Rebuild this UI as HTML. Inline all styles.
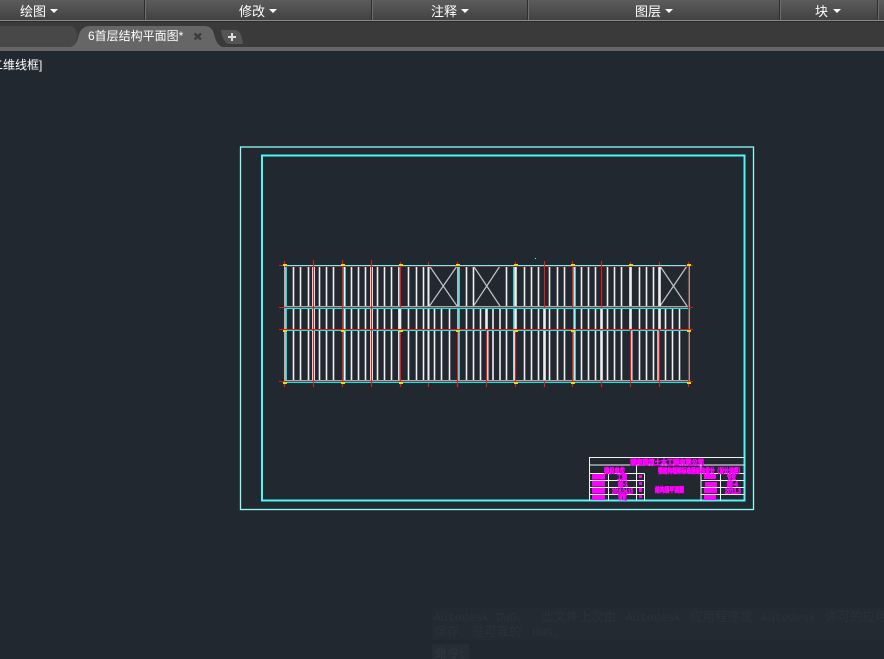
<!DOCTYPE html>
<html lang="zh"><head><meta charset="utf-8">
<style>
html,body{margin:0;padding:0;background:#212830;width:884px;height:659px;overflow:hidden}
body{position:relative;font-family:"Liberation Sans","Noto Sans CJK SC",sans-serif}
.abs{position:absolute}
#bar{left:0;top:0;width:884px;height:20px;background:linear-gradient(#5c5c5c,#424242)}
#l1{left:0;top:20px;width:884px;height:1px;background:#8a8a8a}
#l0{left:0;top:21px;width:884px;height:1px;background:#2a2a2a}
#tabs{left:0;top:22px;width:884px;height:25px;background:#3a3a3a}
#tl{left:0;top:47px;width:884px;height:4px;background:#666}
.sep{top:0;width:1px;height:20px;background:#2e2e2e;box-shadow:1px 0 0 #6e6e6e}
.m{top:4px;color:#fff;font-size:13px;line-height:16px;white-space:nowrap}
.ar{top:9px;width:0;height:0;border-left:4px solid transparent;border-right:4px solid transparent;border-top:4px solid #fff}
.t{color:#2b3239;font-family:"Liberation Mono","Noto Sans CJK SC",monospace;font-size:11.5px;line-height:15px;white-space:nowrap}
.c{font-size:12.500px;font-family:"Noto Sans CJK SC",sans-serif}
svg{position:absolute;left:0;top:0}
</style></head><body>
<div class="abs" id="bar"></div><div class="abs" id="l1"></div><div class="abs" id="l0"></div><div class="abs" id="tabs"></div><div class="abs" id="tl"></div>
<div class="abs sep" style="left:144px"></div><div class="abs sep" style="left:371px"></div><div class="abs sep" style="left:527px"></div><div class="abs sep" style="left:779px"></div><div class="abs sep" style="left:877px"></div>
<div class="abs m" style="left:20px">绘图</div><div class="abs ar" style="left:50px"></div>
<div class="abs m" style="left:239px">修改</div><div class="abs ar" style="left:269px"></div>
<div class="abs m" style="left:431px">注释</div><div class="abs ar" style="left:461px"></div>
<div class="abs m" style="left:635px">图层</div><div class="abs ar" style="left:665px"></div>
<div class="abs m" style="left:815px">块</div><div class="abs ar" style="left:833px"></div>

<svg width="884" height="659" viewBox="0 0 884 659" xmlns="http://www.w3.org/2000/svg">
<path d="M0 26H68Q76 26 77 34V38Q76 47 68 47H0Z" fill="#484848"/>
<path d="M70 47Q76 46 78 38Q80 26 90 26H204Q212 26 214 34Q216 44 222 47Z" fill="#666"/>
<path d="M221 30H236Q242 32 243 44H228Q222 40 221 30Z" fill="#555"/>
<path d="M232 33V41M228 37H236" stroke="#ddd" stroke-width="2"/>
<path d="M194.500 33.500L201 39.500M201 33.500L194.500 39.500" stroke="#3c3c3c" stroke-width="2.400"/>

<rect x="240.500" y="147" width="513" height="362.500" fill="none" stroke="#8ffcfc" stroke-width="1.300"/>
<rect x="262" y="155.500" width="482.500" height="345" fill="none" stroke="#4ff6f6" stroke-width="2"/>

<!-- white joists -->
<path stroke="#f0f0f0" stroke-width="1.600" fill="none" d="M293.500 266V382M300.500 266V382M308.500 266V382M319.500 266V382M326.500 266V382M333.500 266V382M351.500 266V382M358.500 266V382M365.500 266V382M377.500 266V382M384.500 266V382M391.500 266V382M408.500 266V382M416.500 266V382M423.500 266V382M506.500 266V382M524.500 266V382M531.500 266V382M538.500 266V382M549.500 266V382M557.500 266V382M564.500 266V382M581.500 266V382M588.500 266V382M595.500 266V382M607.500 266V382M614.500 266V382M621.500 266V382M639.500 266V382M646.500 266V382M653.500 266V382"/>
<path stroke="#f0f0f0" stroke-width="1.600" fill="none" d="M434.500 307V382M441.500 307V382M449.500 307V382M466.500 266V382M473.500 266V382M480.500 307V382M493 307V382M500 307V382M665.500 307V382M672.500 307V382M679.500 307V382"/>
<!-- X braces -->
<path stroke="#c4c4c4" stroke-width="1.200" fill="none" d="M429.500 266L457 306M457 266L429.500 306M473.500 266L500 306M500 266L473.500 306M660 266L687 306M687 266L660 306"/>
<!-- white flanks behind red -->
<path stroke="#e4e4e4" stroke-width="3" fill="none" d="M313.500 266V382M371.500 266V382"/>
<!-- cyan tint beside double members -->
<path stroke="#16d8d8" stroke-width="1" fill="none" d="M286.500 266V382M345.500 266V382M459.500 266V382M575.500 266V382M689.500 266V384M513.500 266V382"/>
<!-- thick white -->
<path stroke="#f2f2f2" stroke-width="1.400" fill="none" d="M285 266V382M344.300 266V382M398.800 266V382M458 266V382M574.200 266V382M514.200 329V382M487.800 329V382M631.800 329V382M658 329V382"/>
<path stroke="#efefef" stroke-width="2.600" fill="none" d="M486.500 307V329M400 307V329M544.500 307V382M601.500 307V382M515.500 266V329M630.500 266V329M659.500 266V329"/>
<path stroke="#f0f0f0" stroke-width="2" fill="none" d="M428.500 266V382"/>
<!-- cyan horizontals -->
<path stroke="#12e8e8" stroke-width="1" fill="none" d="M284 306.500H690M284 308.500H690M284 330.500H690M284 380.500H690M284 382.500H690"/>
<path stroke="#6ff4f4" stroke-width="1" fill="none" d="M284 265.500H690"/>
<!-- red horizontals -->
<path stroke="#f01414" stroke-width="1" fill="none" d="M279 307.500H693M279 329.500H693M279 381.500H693M279 265.500H285M686 265.500H693"/>
<path stroke="#6e343c" stroke-width="1" fill="none" d="M285 266.500H688"/>
<!-- red verticals -->
<path stroke="#f81414" stroke-width="1.100" fill="none" d="M313.500 260V387M342.500 260V387M371.500 260V387M400.500 262V307M400.500 329V387M457.500 329V387M486.500 329V387M515.500 329V387M544.500 261V307M572.500 261V307M572.500 329V382M601.500 261V307M630.500 329V387M659.500 329V387M688.500 262V387"/>
<path stroke="#f81414" stroke-width="1.200" fill="none" d="M284.500 261V265M284.500 383V387M400.500 383V387M428.500 262V265M428.500 383V387M457.500 262V265M457.500 383V387M515.500 262V265M572.500 383V387M630.500 262V265M659.500 262V265M544.500 382V387M601.500 382V387"/>
<!-- yellow columns -->
<path stroke="#e6dc10" stroke-width="2" fill="none" d="M283 265H287M283 331H287M283 383H287M341 265H345M341 331H345M341 383H345M399 265H403M399 331H403M399 383H403M456 265H460M456 331H460M514 265H518M514 331H518M514 383H518M571 265H575M571 331H575M571 383H575M629 265H633M687 265H691M687 331H691M687 383H691"/>
<rect x="535" y="258" width="1" height="1" fill="#5ff"/>

<!-- title block -->
<path stroke="#f2f2f2" stroke-width="1" fill="none" d="M589.500 457.500H744.500M589.500 465H744.500M589.500 473.500H644.500M701 473.500H744.500M589.500 480.500H644.500M701 480.500H744.500M589.500 487.500H644.500M701 487.500H744.500M589.500 494.500H644.500M701 494.500H744.500M589.500 457V500.500M608.500 473.500V500.500M636.500 465V500.500M644.500 473.500V500.500M701 465V500.500M720.500 473.500V500.500"/>
<g fill="#ff00ff" stroke="#ff00ff" stroke-width=".7" font-family="Liberation Sans,Noto Sans CJK SC,sans-serif" font-size="7" font-weight="700">
<text x="630" y="464.500" textLength="74" lengthAdjust="spacingAndGlyphs">湖南建筑土木工程有限公司</text>
<text x="604" y="473" textLength="21" lengthAdjust="spacingAndGlyphs">建设单位</text>
<text x="658" y="473" textLength="85" lengthAdjust="spacingAndGlyphs">钢结构框架标准层结构设计（设计说明）</text>
<text x="655" y="492" textLength="29" lengthAdjust="spacingAndGlyphs">结构层平面图</text>
<text x="617" y="479.500" textLength="10" lengthAdjust="spacingAndGlyphs">工程</text>
<text x="618" y="486.500" textLength="10" lengthAdjust="spacingAndGlyphs">结-1</text>
<text x="612" y="493.500" textLength="21" lengthAdjust="spacingAndGlyphs">2016.04.15</text>
<text x="618" y="499.500" textLength="9" lengthAdjust="spacingAndGlyphs">审定</text>
<text x="727" y="479.500" textLength="9" lengthAdjust="spacingAndGlyphs">专业</text>
<text x="727" y="486.500" textLength="11" lengthAdjust="spacingAndGlyphs">结-4</text>
<text x="725" y="493.500" textLength="16" lengthAdjust="spacingAndGlyphs">2011.3</text>
</g>
<g fill="#ff00ff">
<rect x="592" y="474" width="13" height="5.500"/><rect x="592" y="481" width="13" height="5.500"/><rect x="592" y="488" width="13" height="5.500"/><rect x="592" y="495" width="13" height="5"/>
<rect x="639" y="475" width="3" height="3"/><rect x="639" y="482" width="3" height="3"/><rect x="639" y="488" width="3" height="4"/><rect x="639" y="495" width="3" height="3"/>
<rect x="704" y="474" width="12" height="5"/><rect x="705" y="482" width="12" height="5"/><rect x="704" y="488" width="13" height="5"/><rect x="704" y="495" width="12" height="5"/>
</g>
</svg>

<div class="abs" style="left:88px;top:28px;color:#fff;font-size:12px;line-height:16px;white-space:nowrap">6首层结构平面图*</div>
<div class="abs" style="left:-9px;top:57px;color:#fff;font-size:12px;line-height:16px;white-space:nowrap">二维线框]</div>

<div class="abs" style="left:432px;top:608px;width:452px;height:32px;background:#232a32"></div>
<div class="abs" style="left:432px;top:644px;width:37px;height:15px;background:#272d34"></div>
<div class="abs t" style="left:434px;top:611px">Autodesk DWG。</div>
<div class="abs t c" style="left:541px;top:608px">此文件上次由</div>
<div class="abs t" style="left:626px;top:611px">Autodesk</div>
<div class="abs t c" style="left:690px;top:608px">应用程序或</div>
<div class="abs t" style="left:761px;top:611px">Autodesk</div>
<div class="abs t c" style="left:825px;top:608px">许可的应用</div>
<div class="abs t c" style="left:434px;top:623px">保存，是可靠的</div>
<div class="abs t" style="left:532px;top:626px">DWG。</div>
<div class="abs t c" style="left:434px;top:645px;font-size:13px;color:#30373d">命令:</div>
</body></html>
